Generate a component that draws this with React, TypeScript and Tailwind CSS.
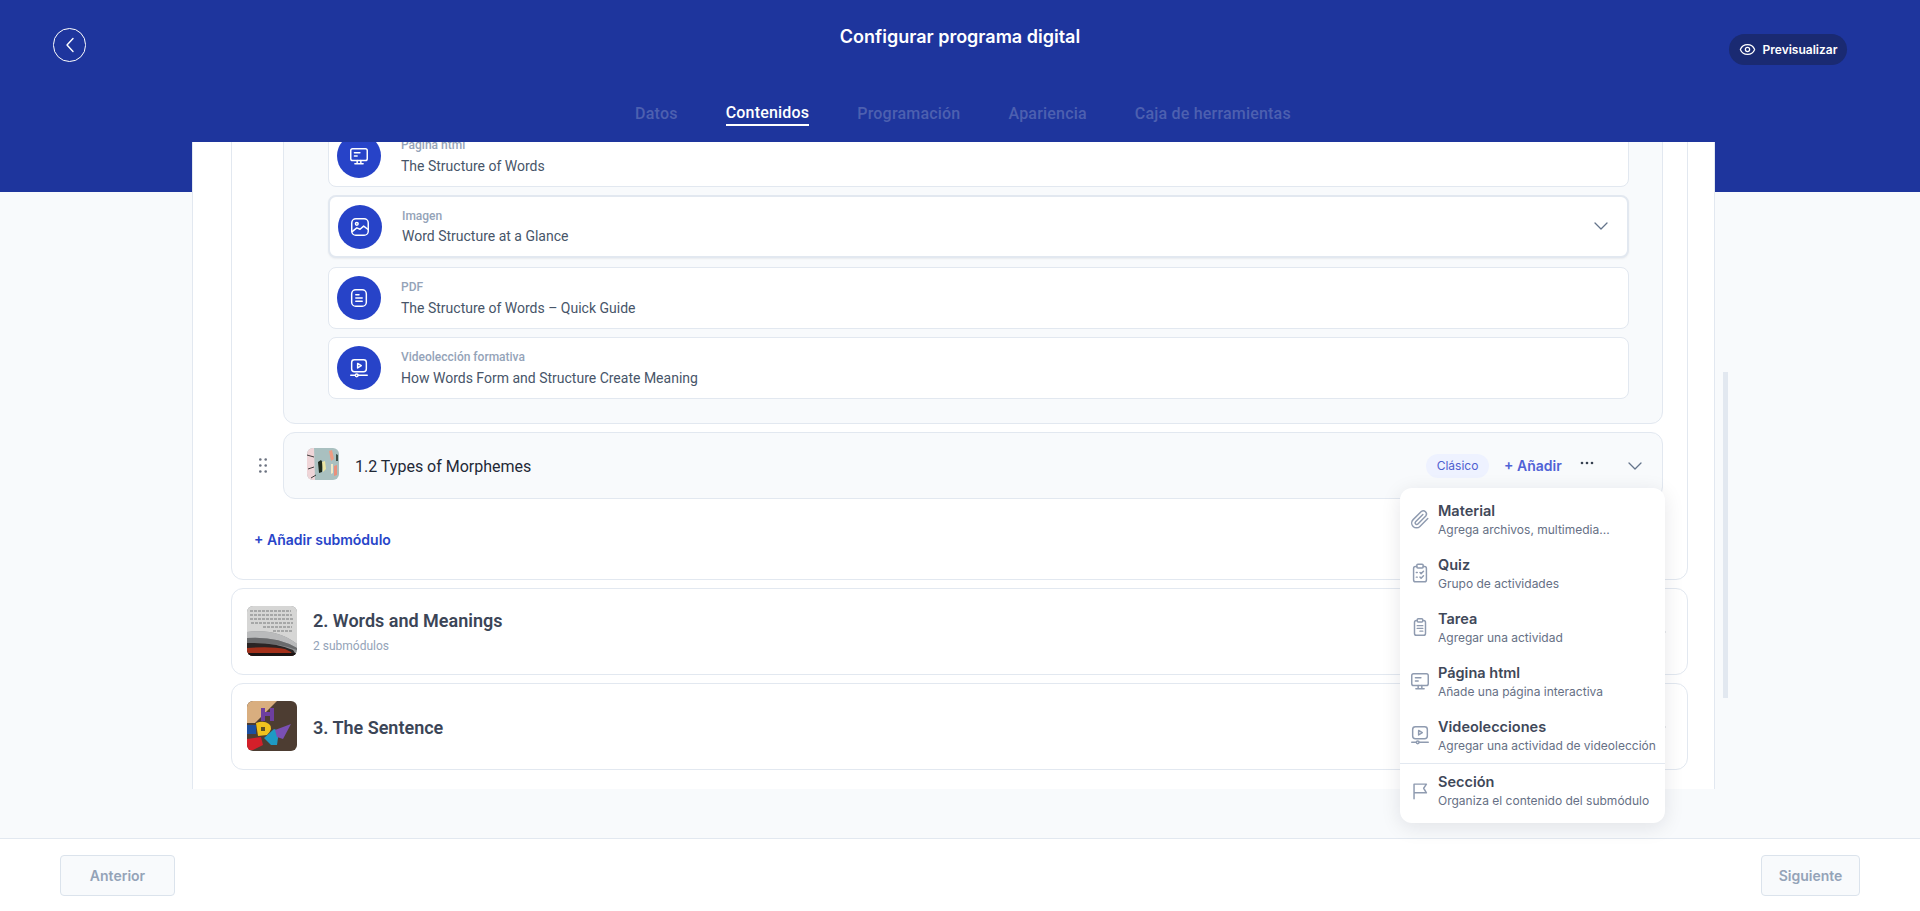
import { Eye } from "lucide-react";

const roboto = "font-['Roboto',sans-serif]";

type IconProps = { className?: string };

function Svg({ className, children }: IconProps & { children: React.ReactNode }) {
  return (
    <svg viewBox="0 0 24 24" fill="none" stroke="currentColor" strokeWidth={1.6} strokeLinecap="round" strokeLinejoin="round" className={className}>
      {children}
    </svg>
  );
}

function MonitorIcon({ className }: IconProps) {
  return (
    <Svg className={className}>
      <rect x="3" y="4" width="18" height="13" rx="2" />
      <path d="M7 8.5h6M7 12h3M10 17v3M14 17v3M7.5 20.5h9" />
    </Svg>
  );
}

function ImageIcon({ className }: IconProps) {
  return (
    <Svg className={className}>
      <rect x="3" y="3" width="18" height="18" rx="4.5" />
      <circle cx="8.5" cy="8.5" r="1.5" />
      <path d="M3.5 17l5-4 3.5 1.5 4-3.5 4.5 3.5" />
    </Svg>
  );
}

function DocIcon({ className }: IconProps) {
  return (
    <Svg className={className}>
      <rect x="4" y="3" width="16" height="18" rx="4.5" />
      <path d="M8.5 8.5h3.5M8.5 12h7M8.5 15.5h7" />
    </Svg>
  );
}

function VideoIcon({ className }: IconProps) {
  return (
    <Svg className={className}>
      <rect x="4" y="3" width="16" height="13" rx="3" />
      <path d="M10.5 7l4 2.5-4 2.5z" />
      <path d="M3 20h5M11 20h10" />
      <circle cx="9.5" cy="20" r="1.5" />
    </Svg>
  );
}

function ClipIcon({ className }: IconProps) {
  return (
    <Svg className={className}>
      <path d="M20.5 11.5l-8.6 8.6a5.2 5.2 0 0 1-7.4-7.4l8.9-8.9a3.5 3.5 0 0 1 4.9 4.9l-8.6 8.7a1.7 1.7 0 0 1-2.5-2.5l7.9-7.9" />
    </Svg>
  );
}

function QuizIcon({ className }: IconProps) {
  return (
    <Svg className={className}>
      <path d="M8.5 5H7a2 2 0 0 0-2 2v12.5a2 2 0 0 0 2 2h10a2 2 0 0 0 2-2V7a2 2 0 0 0-2-2h-1.5" />
      <rect x="8.5" y="2.5" width="7" height="4" rx="1.2" />
      <path d="M8 11.5h1M8 16.5h1M12 11.5l1.2 1.2 2.6-2.6M12 16.5l1.2 1.2 2.6-2.6" />
    </Svg>
  );
}

function TaskIcon({ className }: IconProps) {
  return (
    <Svg className={className}>
      <path d="M9 5H8a2 2 0 0 0-2 2v12a2 2 0 0 0 2 2h8a2 2 0 0 0 2-2V7a2 2 0 0 0-2-2h-1" />
      <rect x="9" y="3" width="6" height="3.5" rx="1" />
      <path d="M9 10.5h6M9 13.5h6M12 16.5h3" />
    </Svg>
  );
}

function FlagIcon({ className }: IconProps) {
  return (
    <Svg className={className}>
      <path d="M5.5 20.5V4.5H19l-3 4.5 3 5H5.5" />
    </Svg>
  );
}

function Chevron({ className }: IconProps) {
  return (
    <svg viewBox="0 0 14 8" fill="none" stroke="currentColor" strokeWidth={1.3} strokeLinecap="round" strokeLinejoin="round" className={className}>
      <path d="M1 1l6 6 6-6" />
    </svg>
  );
}

function Dots({ className }: IconProps) {
  return (
    <svg viewBox="0 0 14 4" fill="currentColor" className={className}>
      <circle cx="2" cy="2" r="1.3" />
      <circle cx="7" cy="2" r="1.3" />
      <circle cx="12" cy="2" r="1.3" />
    </svg>
  );
}

function Grip() {
  return (
    <svg viewBox="0 0 8 15" fill="#6b7280" className="h-[15px] w-2 shrink-0">
      <circle cx="1.3" cy="1.5" r="1.3" />
      <circle cx="6.7" cy="1.5" r="1.3" />
      <circle cx="1.3" cy="7.5" r="1.3" />
      <circle cx="6.7" cy="7.5" r="1.3" />
      <circle cx="1.3" cy="13.5" r="1.3" />
      <circle cx="6.7" cy="13.5" r="1.3" />
    </svg>
  );
}

function ThumbMorphemes() {
  return (
    <svg viewBox="0 0 32 32" className="h-8 w-8 shrink-0 rounded-md">
      <rect width="32" height="32" fill="#a9c0c0" />
      <path d="M0 0h7l1 32H0z" fill="#efd5d8" />
      <path d="M0 7l7 2M1 21l6-2M4 30l5-3" stroke="#2b2b2b" strokeWidth="0.9" />
      <path d="M11 14l3-2 2 3-1 9-3 1z" fill="#1f2a1c" />
      <path d="M15 14l3-1 1 8-3 3z" fill="#ece6a3" />
      <path d="M22 3l3-1 2 9-3 2z" fill="#ee9c83" />
      <path d="M27 18l3-1v10l-3 1z" fill="#e9907c" />
      <path d="M24 16l2 0 0 9-2 1z" fill="#efe9c8" />
      <path d="M29 6l2 1v6l-2 0z" fill="#3c4f47" />
    </svg>
  );
}

function ThumbBook() {
  return (
    <svg viewBox="0 0 50 50" className="h-[50px] w-[50px] shrink-0 rounded-md">
      <rect width="50" height="50" fill="#8f9294" />
      <path d="M0 0h46q4 0 4 4v34Q30 22 0 26z" fill="#d6d6d5" />
      <path d="M3 5h41M3 9h42M3 13h43M4 17h42M16 21h29M26 25h19" stroke="#77797b" strokeWidth="1.1" strokeDasharray="3 1" />
      <path d="M0 26Q30 22 50 38v4Q30 30 0 32z" fill="#b9babb" />
      <path d="M0 32Q30 30 50 42v2Q30 36 0 37z" fill="#6a6b6d" />
      <path d="M0 37Q28 36 46 44l4 6H0z" fill="#2a2424" />
      <path d="M0 42Q24 40 38 43l6 3 2 4H0z" fill="#a3301a" />
      <path d="M0 47h50v3H0z" fill="#1b1414" />
    </svg>
  );
}

function ThumbBlocks() {
  return (
    <svg viewBox="0 0 50 50" className="h-[50px] w-[50px] shrink-0 rounded-md">
      <rect width="50" height="50" fill="#4d3d32" />
      <path d="M0 0h30L18 12 8 22H0z" fill="#d9ae7f" />
      <path d="M14 7h4v4h5V7h4v13h-4v-5h-5v5h-4z" fill="#6d3f9f" />
      <path d="M9 22q8-3 13 1t-2 11l-9 1z" fill="#f0c21e" />
      <path d="M14 26h4v4h-4z" fill="#5d5024" />
      <path d="M17 37l10-9 5 2-2 14-6 0z" fill="#1e9ac4" />
      <path d="M28 29l16-6-8 15-6-2z" fill="#7a50b4" />
      <path d="M0 38l14-2 2 8-10 5H0z" fill="#d4202a" />
      <path d="M0 24h9v9H0z" fill="#1c4fa0" />
    </svg>
  );
}

const items = [
  { icon: MonitorIcon, label: "Página html", title: "The Structure of Words" },
  { icon: ImageIcon, label: "Imagen", title: "Word Structure at a Glance", active: true },
  { icon: DocIcon, label: "PDF", title: "The Structure of Words – Quick Guide" },
  { icon: VideoIcon, label: "Videolección formativa", title: "How Words Form and Structure Create Meaning" },
];

const menu = [
  { icon: ClipIcon, title: "Material", sub: "Agrega archivos, multimedia..." },
  { icon: QuizIcon, title: "Quiz", sub: "Grupo de actividades" },
  { icon: TaskIcon, title: "Tarea", sub: "Agregar una actividad" },
  { icon: MonitorIcon, title: "Página html", sub: "Añade una página interactiva" },
  { icon: VideoIcon, title: "Videolecciones", sub: "Agregar una actividad de videolección" },
];

function MenuRow({ item, height = "h-[54px]" }: { item: (typeof menu)[number]; height?: string }) {
  return (
    <div className={`flex items-center pl-[9px] ${height}`}>
      <item.icon className="h-[22px] w-[22px] shrink-0 text-[#8f9bb0]" />
      <div className="ml-[7px] whitespace-nowrap">
        <div className="text-[14.5px] font-semibold leading-5 text-[#3f4859]">{item.title}</div>
        <div className="text-xs leading-[17px] text-[#667085]">{item.sub}</div>
      </div>
    </div>
  );
}

export default function App() {
  return (
    <div className="flex h-[911px] flex-col overflow-hidden bg-[#f8fafc] font-['Inter',sans-serif]">
      <header className="relative z-20 h-[142px] shrink-0 bg-[#1e359d]">
        <div className="grid grid-cols-[1fr_auto_1fr] items-start px-[53px] pt-[23px]">
          <button className="mt-[5px] flex h-[34px] w-[33px] items-center justify-center rounded-full border-[1.5px] border-white text-white">
            <svg viewBox="0 0 10 16" fill="none" stroke="currentColor" strokeWidth={1.4} strokeLinecap="round" strokeLinejoin="round" className="h-4 w-[10px]">
              <path d="M8 1.5L2 8l6 6.5" />
            </svg>
          </button>
          <h1 className="text-lg font-semibold leading-7 text-white">Configurar programa digital</h1>
          <div className="flex justify-end pr-5">
            <button className="mt-[11px] flex h-[31px] w-[118px] items-center justify-center gap-[7px] rounded-full bg-[#1a2a72] text-xs font-semibold text-white">
              <Eye className="h-[17px] w-[17px]" strokeWidth={1.8} />
              Previsualizar
            </button>
          </div>
        </div>
        <nav className={`ml-[6px] mt-[37px] flex justify-center gap-12 text-base font-medium tracking-[0.2px] text-[#4d60b0] ${roboto}`}>
          <span className="leading-[24px]">Datos</span>
          <span className="border-b-2 border-white leading-[22px] text-white">Contenidos</span>
          <span className="leading-[24px]">Programación</span>
          <span className="leading-[24px]">Apariencia</span>
          <span className="leading-[24px]">Caja de herramientas</span>
        </nav>
      </header>

      <main className="relative flex-1">
        <div className="absolute inset-x-0 top-0 h-[50px] bg-[#1e359d]" />
        <div className="relative ml-[192px] h-[647px] w-[1523px] overflow-hidden border-x border-[#e2e8f0] bg-white">
          <div className={`-mt-[60px] pl-[38px] pr-[26px] ${roboto}`}>
            <section className="rounded-xl border border-[#e2e8f0] pl-[51px] pr-6 pt-[21px]">
              <div className="rounded-xl border border-[#e2e8f0] bg-[#f8fafc] pb-6 pl-11 pr-[33px] pt-5">
                <div className="flex flex-col gap-2">
                  {items.map((it) => (
                    <div
                      key={it.label}
                      className={`flex items-center rounded-lg bg-white pl-2 ${it.active ? "mb-[1px] h-[63px] border-2 border-[#e2e8f0] pr-[19px] shadow-[0_1px_2px_rgba(15,23,42,0.06)]" : "h-[62px] border border-[#e2e8f0]"}`}
                    >
                      <div className="flex h-11 w-11 shrink-0 items-center justify-center rounded-full bg-[#2743c8] text-white">
                        <it.icon className="h-[22px] w-[22px]" />
                      </div>
                      <div className="ml-5 flex-1 pt-[1px]">
                        <div className="text-xs font-medium leading-4 text-[#94a3b8]">{it.label}</div>
                        <div className="mt-[2.5px] text-sm leading-5 text-[#475569]">{it.title}</div>
                      </div>
                      {it.active && <Chevron className="-mt-[1px] h-2 w-[14px] text-[#64748b]" />}
                    </div>
                  ))}
                </div>
              </div>

              <div className="-ml-6 mt-2 flex items-center gap-4">
                <Grip />
                <div className="flex h-[67px] flex-1 items-center rounded-xl border border-[#e2e8f0] bg-[#f8fafc] pl-[23px] pr-5">
                  <div className="-mt-[3px]">
                    <ThumbMorphemes />
                  </div>
                  <span className="ml-4 mt-[2px] flex-1 text-base text-[#1f2937]">1.2 Types of Morphemes</span>
                  <span className="mt-[1px] flex h-6 w-[63px] items-center justify-center rounded-full bg-[#eef2ff] font-['Inter',sans-serif] text-xs text-[#4f60d0]">Clásico</span>
                  <span className="ml-[15px] w-14 whitespace-nowrap font-['Inter',sans-serif] text-sm font-semibold text-[#5063d6]">+ Añadir</span>
                  <Dots className="-mt-[5px] ml-5 h-1 w-[14px] text-[#374151]" />
                  <Chevron className="ml-[34px] h-2 w-[14px] text-[#64748b]" />
                </div>
              </div>

              <div className="-ml-[29px] mb-[29px] mt-[31px] font-['Inter',sans-serif] text-sm font-semibold leading-5 text-[#2745c9]">+ Añadir submódulo</div>
            </section>

            <section className="mt-2 flex h-[87px] items-center rounded-xl border border-[#e2e8f0] pl-[15px] pr-[21px]">
              <div className="-mt-[2px]">
                <ThumbBook />
              </div>
              <div className="ml-4 flex-1 pt-[1px]">
                <div className="text-lg font-semibold leading-6 text-[#3b4557]">2. Words and Meanings</div>
                <div className="mt-1 text-xs leading-[18px] text-[#94a3b8]">2 submódulos</div>
              </div>
              <Dots className="h-1 w-[14px] text-[#64748b]" />
            </section>

            <section className="mt-2 flex h-[87px] items-center rounded-xl border border-[#e2e8f0] pl-[15px] pr-[21px]">
              <div className="-mt-[1px]">
                <ThumbBlocks />
              </div>
              <div className="ml-4 mt-[3px] flex-1 text-lg font-semibold leading-6 text-[#3b4557]">3. The Sentence</div>
              <Dots className="h-1 w-[14px] text-[#64748b]" />
            </section>
          </div>
        </div>

        {/* scroll thumb */}
        <div className="absolute left-[1723px] top-[230px] h-[326px] w-[5px] bg-[#e2e8f0]" />

        {/* add menu */}
        <div className="absolute left-[1400px] top-[346px] z-30 w-[265px] rounded-xl bg-white pt-1 shadow-[0_4px_20px_rgba(15,23,42,0.1)]">
          {menu.map((m) => (
            <MenuRow key={m.title} item={m} />
          ))}
          <div className="mt-[1px] border-t border-[#e2e8f0] pb-[6px]">
            <MenuRow item={{ icon: FlagIcon, title: "Sección", sub: "Organiza el contenido del submódulo" }} height="h-[53px]" />
          </div>
        </div>
      </main>

      <footer className="flex h-[73px] shrink-0 items-start justify-between border-t border-[#e2e8f0] bg-white px-[60px] pt-4">
        <button className="h-[41px] w-[115px] rounded-[4px] border border-[#dbe3ec] bg-[#f8fafc] text-sm font-semibold text-[#94a3b8]">Anterior</button>
        <button className="h-[41px] w-[99px] rounded-[4px] border border-[#dbe3ec] bg-[#f8fafc] text-sm font-semibold text-[#94a3b8]">Siguiente</button>
      </footer>
    </div>
  );
}
